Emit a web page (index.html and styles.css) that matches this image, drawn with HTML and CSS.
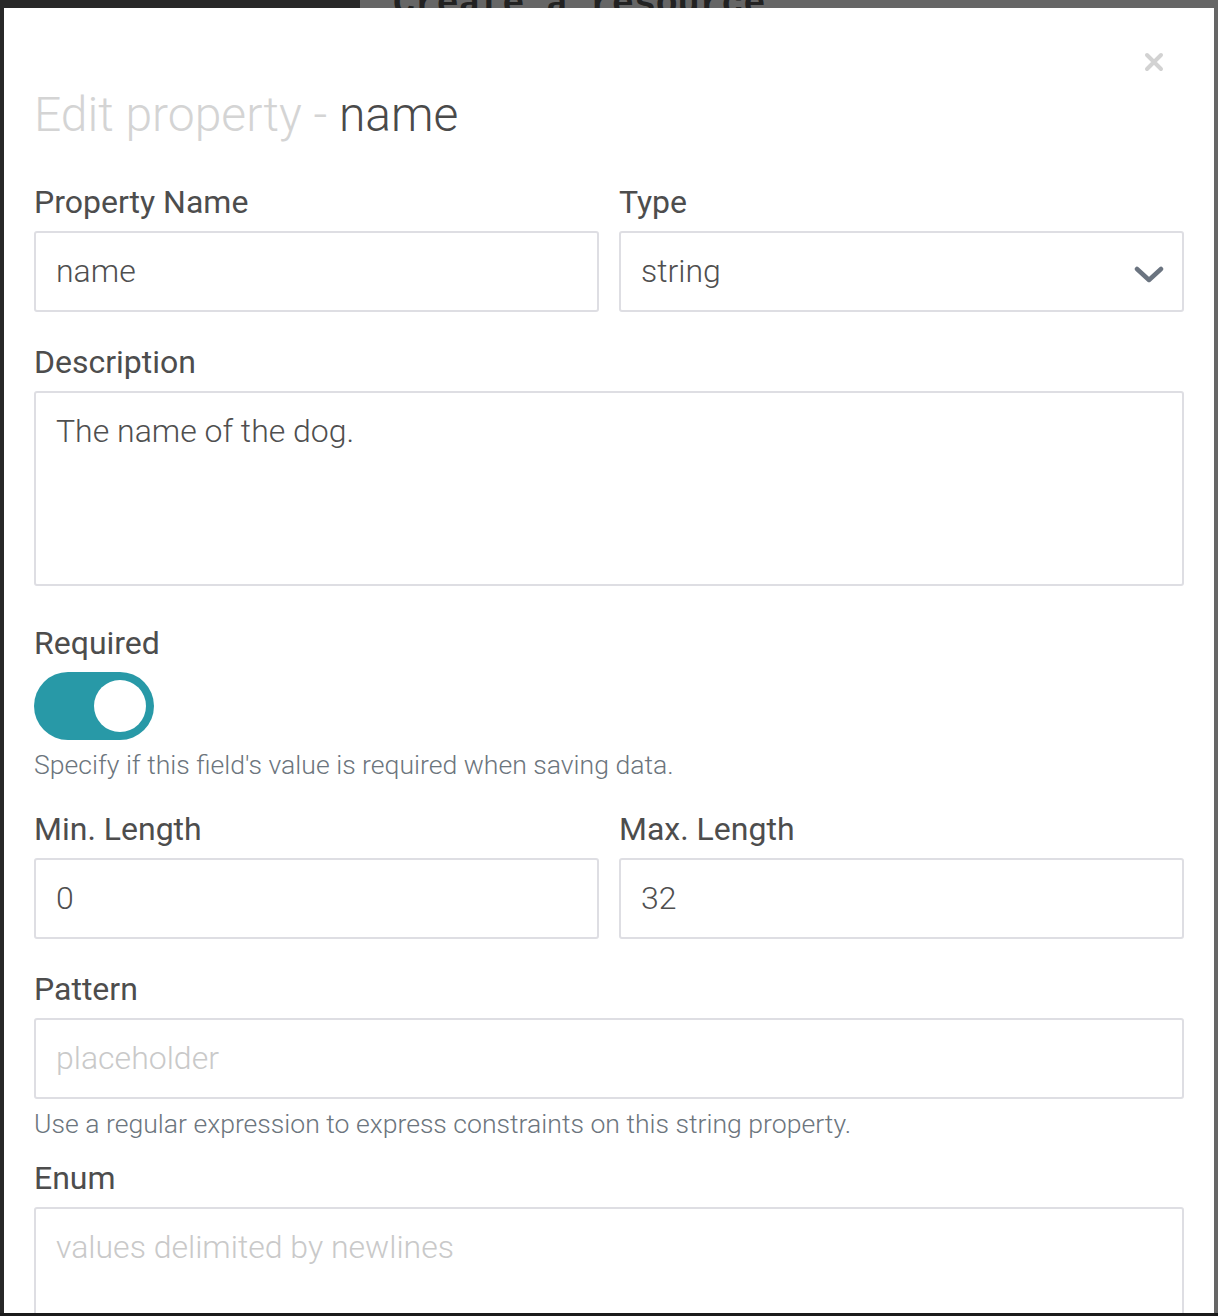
FILE: index.html
```html
<!DOCTYPE html>
<html>
<head>
<meta charset="utf-8">
<link rel="stylesheet" href="styles.css">
</head>
<body>
<div class="backdrop">
  <aside class="sidebar"></aside>
  <main class="main"><h1 class="main-title">Create a resource</h1></main>
</div>
<div class="bottom-edge"></div>

<div class="modal">
  <div class="modal-head">
    <h2 class="modal-title"><span class="muted">Edit property - </span>name</h2>
    <button class="close" aria-label="Close">
      <svg width="20" height="20" viewBox="0 0 20 20"><path d="M3 3L17 17M17 3L3 17" stroke="#d2d2d2" stroke-width="4" stroke-linecap="round"/></svg>
    </button>
  </div>

  <div class="row">
    <div class="group">
      <label class="label">Property Name</label>
      <div class="field">name</div>
    </div>
    <div class="group">
      <label class="label">Type</label>
      <div class="field select"><span>string</span>
        <svg width="30" height="22" viewBox="0 0 30 22"><path d="M3 6L15 17L27 6" fill="none" stroke="#6b7480" stroke-width="4.5" stroke-linecap="round" stroke-linejoin="round"/></svg>
      </div>
    </div>
  </div>

  <div class="group desc-group">
    <label class="label">Description</label>
    <div class="field area">The name of the dog.</div>
  </div>

  <div class="group toggle-group">
    <label class="label">Required</label>
    <div class="toggle"><span class="knob"></span></div>
    <p class="help">Specify if this field's value is required when saving data.</p>
  </div>

  <div class="row">
    <div class="group">
      <label class="label">Min. Length</label>
      <div class="field">0</div>
    </div>
    <div class="group">
      <label class="label">Max. Length</label>
      <div class="field">32</div>
    </div>
  </div>

  <div class="group pattern-group">
    <label class="label">Pattern</label>
    <div class="field placeholder">placeholder</div>
    <p class="help">Use a regular expression to express constraints on this string property.</p>
  </div>

  <div class="group">
    <label class="label">Enum</label>
    <div class="field area placeholder">values delimited by newlines</div>
  </div>
</div>
</body>
</html>
```
FILE: styles.css
```css
* { box-sizing: border-box; }
html, body { margin: 0; padding: 0; }
body {
  width: 1218px;
  height: 1316px;
  overflow: hidden;
  background: #1b1b1b;
  font-family: Roboto, "Liberation Sans", sans-serif;
  position: relative;
}
.backdrop {
  display: flex;
  height: 1313px;
}
.sidebar {
  width: 360px;
  background: #282828;
}
.main {
  flex: 1;
  background: #666666;
  overflow: hidden;
}
.main-title {
  margin: -13px 0 0 33px;
  font-family: "Liberation Mono", monospace;
  font-weight: bold;
  font-size: 36.5px;
  line-height: 36px;
  color: #222;
  white-space: nowrap;
}
.bottom-edge { height: 3px; background: #1b1b1b; }

.modal {
  position: absolute;
  left: 4px;
  top: 8px;
  width: 1210px;
  height: 1305px;
  background: #fff;
  overflow: hidden;
  padding: 44px 30px 0 30px;
}
.modal-head {
  display: flex;
  justify-content: space-between;
  align-items: flex-start;
}
.modal-title {
  margin: 33px 0 33px 0;
  font-size: 48px;
  line-height: 60px;
  font-weight: 300;
  color: #4a4a4a;
}
.muted { color: #d4d4d4; }
.close {
  border: 0;
  background: none;
  padding: 0;
  margin: 0 20px 0 0;
  width: 20px;
  height: 20px;
  display: block;
}
.close svg { display: block; }

.row {
  display: grid;
  grid-template-columns: 1fr 1fr;
  column-gap: 20px;
}
.group { margin-bottom: 26px; }
.label {
  display: block;
  font-size: 32px;
  line-height: 48px;
  color: #4d4d4d;
  margin-bottom: 5px;
}
.field {
  border: 2px solid #dedee3;
  border-radius: 3px;
  padding: 14px 20px;
  font-size: 32px;
  line-height: 49px;
  font-weight: 300;
  color: #4f4f4f;
  height: 81px;
}
.select {
  display: flex;
  align-items: center;
  justify-content: space-between;
  padding-right: 18px;
}
.select svg { display: block; margin-top: 4px; }
.area { height: 195px; }
.placeholder { color: #c9c9c9; }
.toggle {
  margin-top: 3px;
  width: 120px;
  height: 68px;
  border-radius: 34px;
  background: #2899a7;
  display: flex;
  align-items: center;
  justify-content: flex-end;
  padding-right: 8px;
}
.knob {
  width: 52px;
  height: 52px;
  border-radius: 50%;
  background: #fff;
}
.help {
  margin: 7px 0 0 0;
  font-size: 26.6px;
  line-height: 36px;
  font-weight: 300;
  color: #6c757d;
}
.desc-group { margin-bottom: 33px; }
.toggle-group { margin-bottom: 22px; }
.pattern-group { margin-bottom: 12px; }
```
